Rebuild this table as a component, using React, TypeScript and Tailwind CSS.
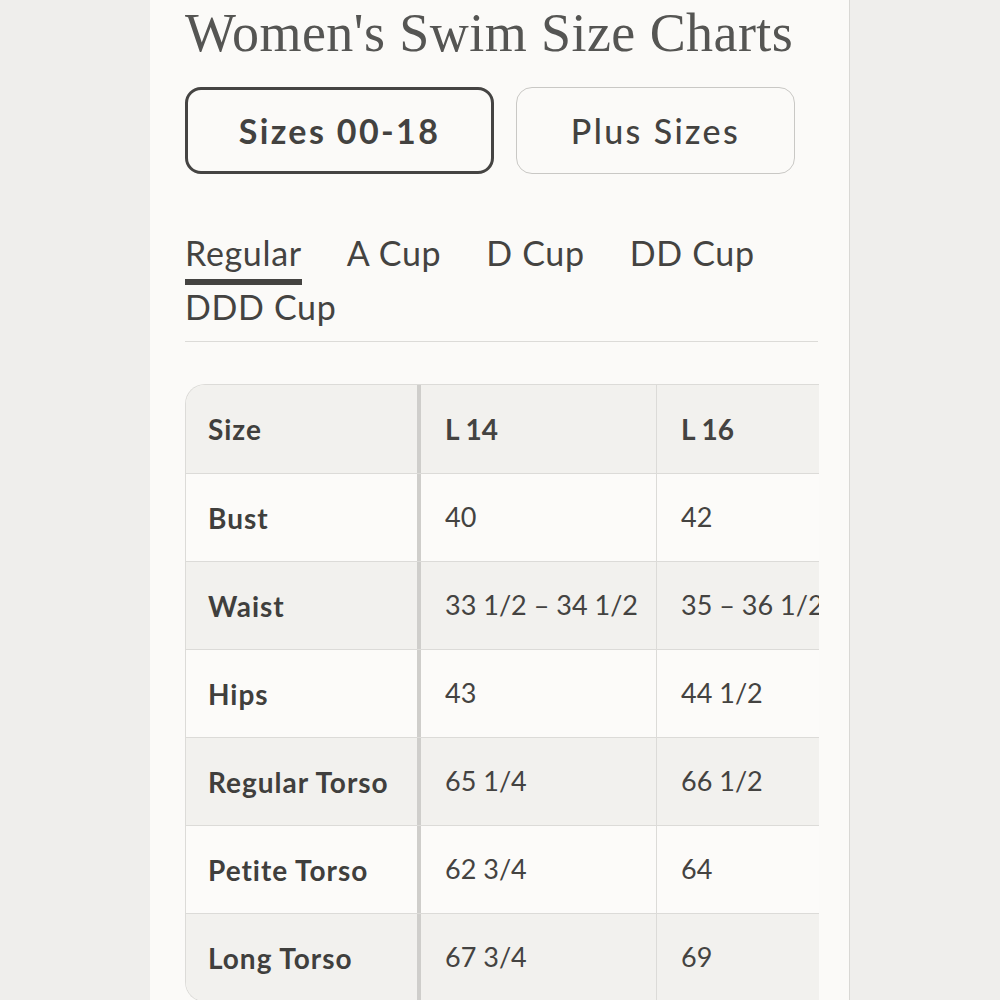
import React from "react";

const rows = [
  { label: "Size", values: ["L 14", "L 16", "L 18"], head: true },
  { label: "Bust", values: ["40", "42", "44"] },
  { label: "Waist", values: ["33 1/2 – 34 1/2", "35 – 36 1/2", "37 – 38 1/2"] },
  { label: "Hips", values: ["43", "44 1/2", "46"] },
  { label: "Regular Torso", values: ["65 1/4", "66 1/2", "67 3/4"] },
  { label: "Petite Torso", values: ["62 3/4", "64", "65 1/4"] },
  { label: "Long Torso", values: ["67 3/4", "69", "70 1/4"] },
];

const tabs = ["Regular", "A Cup", "D Cup", "DD Cup", "DDD Cup"];

const sans = "font-['Lato','Noto_Sans',sans-serif]";

const App = () => {
  return (
    <div className="min-h-screen w-full bg-[#efeeec] flex justify-center">
      <div className="w-[700px] h-[1000px] overflow-hidden bg-[#fbfaf8] border-r border-[#d9d8d5] pl-[35px] pr-[31px]">
        <h1 className="pt-[2px] font-['Liberation_Serif',serif] text-[54px] leading-[62px] text-[#555553] tracking-[0.008em] whitespace-nowrap">
          Women's Swim Size Charts
        </h1>

        <div className={`mt-[23px] flex gap-[22px] ${sans}`}>
          <button className="w-[309px] h-[87px] rounded-[16px] border-[3px] border-[#454443] text-[34px] font-bold tracking-[0.07em] text-[#434240]">
            Sizes 00-18
          </button>
          <button className="w-[279px] h-[87px] rounded-[16px] border border-[#c9c8c5] text-[34px] font-medium tracking-[0.07em] text-[#434240]">
            Plus Sizes
          </button>
        </div>

        <div className={`mt-[54px] flex flex-wrap gap-x-[45px] gap-y-[4px] border-b border-[#dcdbd8] pb-[9px] ${sans}`}>
          {tabs.map((t, i) => (
            <div key={t} className="flex flex-col">
              <span className="text-[34px] leading-[50px] tracking-[0.02em] text-[#444341]">{t}</span>
              {i === 0 && <span className="mt-[1px] h-[6px] bg-[#444341] -mb-[7px]" />}
            </div>
          ))}
        </div>

        <div className={`mt-[42px] w-[634px] overflow-hidden rounded-l-[20px] border border-r-0 border-[#dcdbd8] ${sans}`}>
          {rows.map((r, i) => (
            <div
              key={r.label}
              className={`flex w-[940px] h-[88px] ${i > 0 ? "border-t border-[#dcdbd8]" : ""} ${
                i % 2 === 0 ? "bg-[#f2f1ee]" : "bg-[#fcfbf9]"
              }`}
            >
              <div className="w-[235px] shrink-0 flex items-center pl-[22px] border-r-[4px] border-[#cfcecb] text-[28px] font-bold tracking-[0.035em] text-[#403f3d]">
                {r.label}
              </div>
              {r.values.map((v, j) => (
                <div
                  key={j}
                  className={`w-[236px] shrink-0 flex items-center pl-[24px] text-[27px] text-[#444341] border-r border-[#dcdbd8] ${
                    r.head ? "font-bold text-[28px]" : ""
                  }`}
                >
                  {v}
                </div>
              ))}
            </div>
          ))}
        </div>
      </div>
    </div>
  );
};

export default App;
